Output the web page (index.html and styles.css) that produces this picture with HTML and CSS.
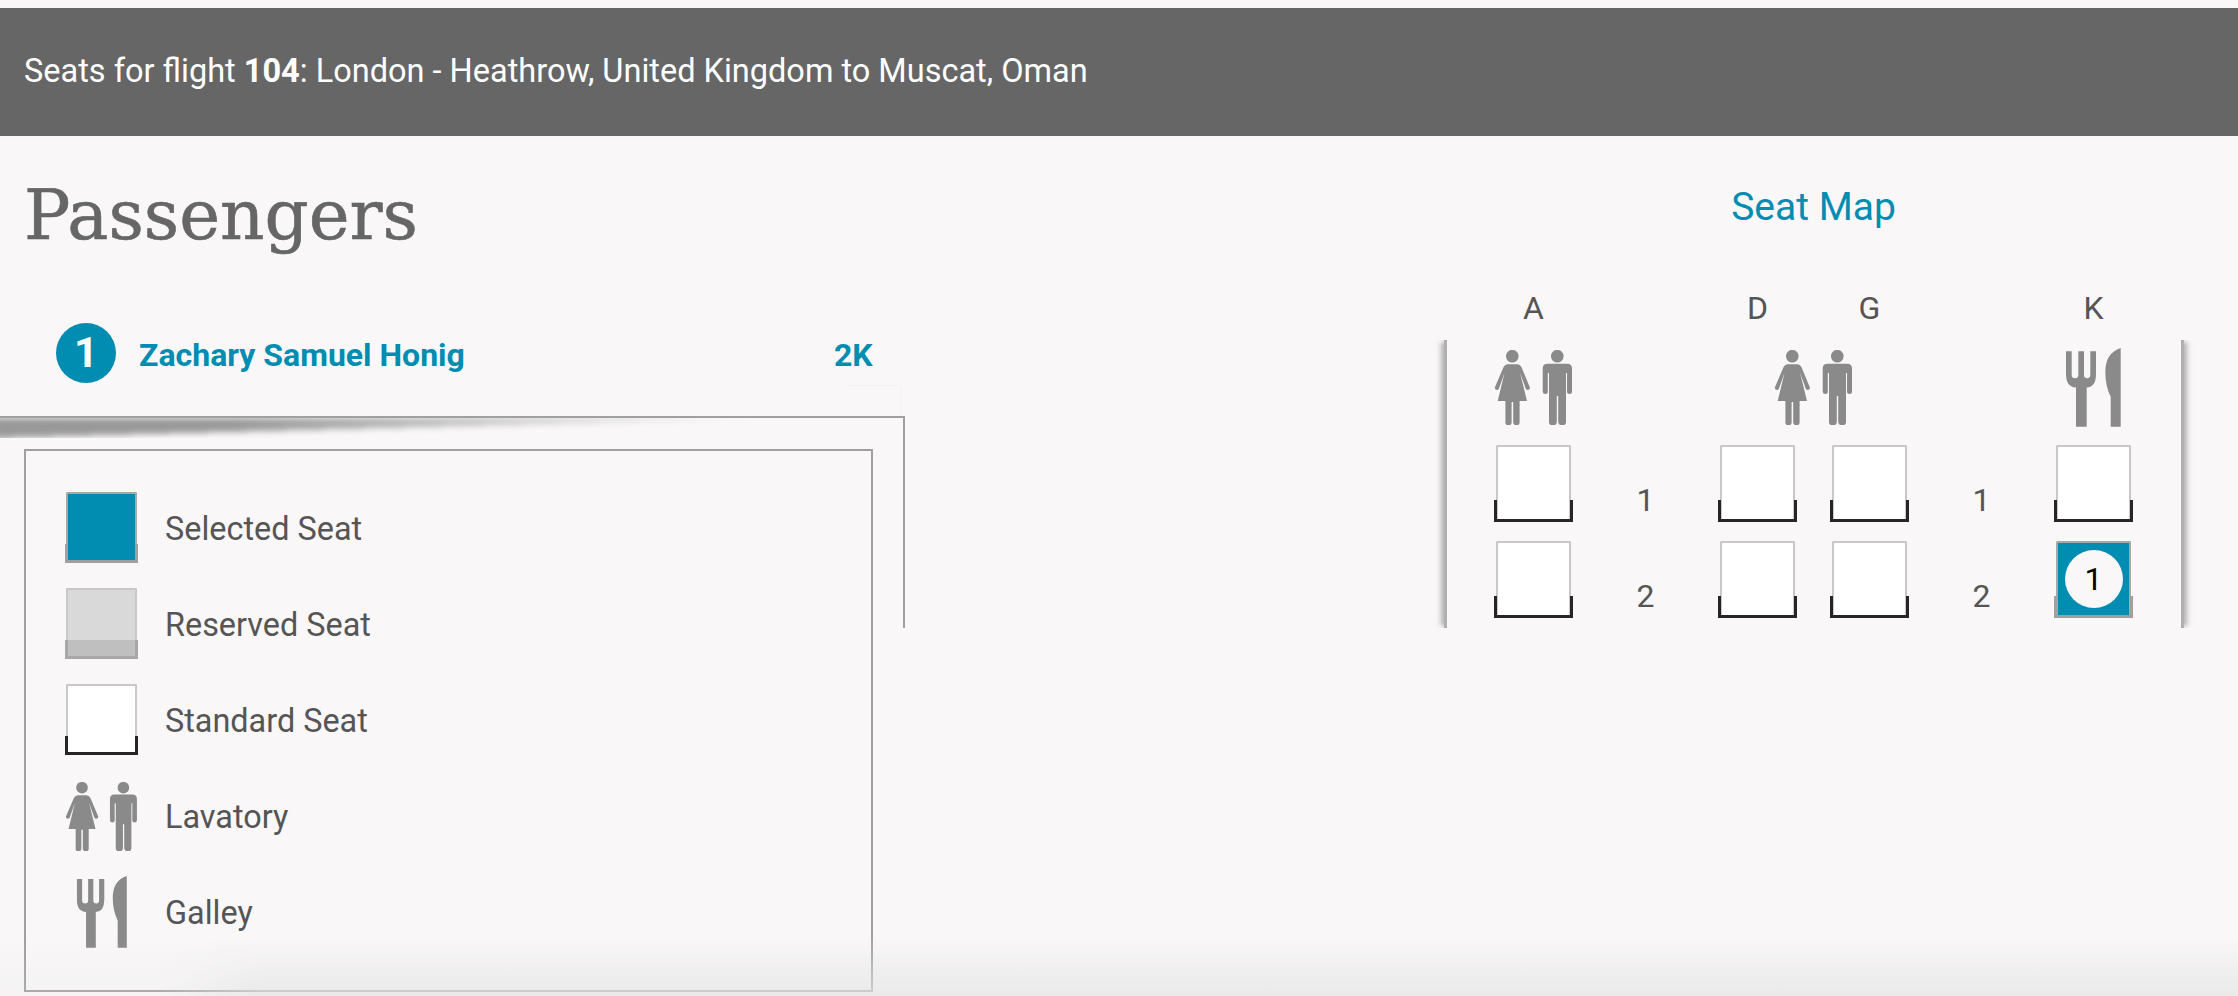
FILE: index.html
```html
<!DOCTYPE html>
<html lang="en">
<head>
<meta charset="utf-8">
<title>Seats for flight 104</title>
<link rel="stylesheet" href="styles.css">
</head>
<body>
<svg class="defs" width="0" height="0" aria-hidden="true">
  <symbol id="lav" viewBox="0 0 77 75">
    <circle cx="17.3" cy="6.2" r="6.3"/>
    <path d="M13 14.3H22q3 0 4.5 3L34.7 37q.7 2-1.2 2.8q-1.9.7-2.8-1.3L25 22.5L32 51H24.6V72.5q0 2.8-3 2.8t-3.4-2.8V52H16.6V72.5q0 2.8-3.2 2.8t-3-2.8V51H2.7L9.6 22.5L4 38.5q-.9 2-2.8 1.3Q-.7 39 0 37L8.5 17.3q1.5-3 4.5-3Z"/>
    <circle cx="62.3" cy="6.2" r="6.3"/>
    <path d="M52.5 13.7H72q5 0 5 5V41.5q0 2.5-2.5 2.5T72 41.5V23H71V72q0 3.3-3.7 3.3T63.2 72V46H61.8V72q0 3.3-4 3.3T54 72V23H52.8V41.5q0 2.5-2.5 2.5T47.7 41.5V18.7q0-5 4.8-5Z"/>
  </symbol>
  <symbol id="galley" viewBox="0 0 55 79">
    <path d="M0 3.3H5.7V27a3.3 3.3 0 0 0 6.6 0V3.3H18V27a3.15 3.15 0 0 0 6.3 0V3.3H30V26Q30 39 20.7 39.5V78.7H10V39.5Q0 39 0 26Z"/>
    <path d="M54.7 0V78.7H44.7V49Q39.3 38 39.3 24Q39.3 5 54.7 0Z"/>
  </symbol>
</svg>

<header class="flight-bar">Seats for flight <b>104</b>: London - Heathrow, United Kingdom to Muscat, Oman</header>

<main class="content">
  <section class="passengers">
    <h1 class="title">Passengers</h1>
    <div class="passenger">
      <span class="badge">1</span>
      <span class="name">Zachary Samuel Honig</span>
      <span class="assigned">2K</span>
    </div>
    <div class="panel">
      <ul class="legend">
        <li class="legend-row"><span class="icon-cell"><span class="seat seat-small selected"></span></span>Selected Seat</li>
        <li class="legend-row"><span class="icon-cell"><span class="seat seat-small reserved"></span></span>Reserved Seat</li>
        <li class="legend-row"><span class="icon-cell"><span class="seat seat-small"></span></span>Standard Seat</li>
        <li class="legend-row"><span class="icon-cell"><svg class="lav lav-small"><use href="#lav"/></svg></span>Lavatory</li>
        <li class="legend-row"><span class="icon-cell"><svg class="galley galley-small"><use href="#galley"/></svg></span>Galley</li>
      </ul>
    </div>
  </section>

  <section class="map">
    <h2 class="map-title">Seat Map</h2>
    <div class="letters">
      <span>A</span><span></span><span>D</span><span>G</span><span></span><span>K</span>
    </div>
    <div class="cabin">
      <div class="cabin-row facilities">
        <svg class="lav"><use href="#lav"/></svg>
        <span></span>
        <svg class="lav lav-span"><use href="#lav"/></svg>
        <span></span>
        <svg class="galley"><use href="#galley"/></svg>
      </div>
      <div class="cabin-row">
        <span class="seat"></span><span class="row-no">1</span><span class="seat"></span><span class="seat"></span><span class="row-no">1</span><span class="seat"></span>
      </div>
      <div class="cabin-row">
        <span class="seat"></span><span class="row-no">2</span><span class="seat"></span><span class="seat"></span><span class="row-no">2</span><span class="seat selected"><span class="occupant">1</span></span>
      </div>
    </div>
  </section>
</main>
</body>
</html>
```

FILE: styles.css
```css
* { box-sizing: border-box; }

html, body { height: 100%; }

body {
  margin: 0;
  padding-top: 8px;
  height: 996px;
  overflow: hidden;
  position: relative;
  background: #f9f7f8;
  color: #555;
  font-family: Roboto, "Liberation Sans", sans-serif;
  font-size: 32px;
}

body::after {
  content: "";
  position: absolute;
  left: 0;
  right: 0;
  bottom: 0;
  height: 60px;
  background: linear-gradient(to bottom, rgba(228, 228, 228, 0), rgba(228, 228, 228, .7));
  -webkit-mask-image: linear-gradient(to right, rgba(0,0,0,.25) 160px, #000 260px);
  mask-image: linear-gradient(to right, rgba(0,0,0,.25) 160px, #000 260px);
  pointer-events: none;
}

.defs { position: absolute; }

.flight-bar {
  height: 128px;
  padding: 0 24px;
  line-height: 126px;
  background: #666;
  color: #fff;
  font-size: 32.5px;
}

.content {
  display: flex;
}

.passengers {
  width: 905px;
  flex: none;
}

.title {
  margin: 0;
  padding: 29px 0 0 24px;
  height: 168px;
  font-family: "DejaVu Serif", serif;
  font-weight: 400;
  font-size: 69px;
  line-height: 100px;
  color: #666;
  -webkit-text-stroke: .6px #666;
}

.passenger {
  display: flex;
  align-items: center;
  height: 112px;
  padding: 0 0 10px 56px;
  position: relative;
  color: #008db1;
  font-weight: 700;
}

.passenger::after {
  content: "";
  position: absolute;
  right: 3px;
  top: 81px;
  width: 56px;
  height: 31px;
  border-top: 1px solid #f4f2f3;
  border-right: 1px solid #f4f2f3;
}

.badge {
  width: 60px;
  height: 60px;
  border-radius: 50%;
  background: #008db1;
  color: #fff;
  font-size: 42px;
  line-height: 60px;
  text-align: center;
  margin: 0 23px 5px 0;
}

.name { width: 695px; }

.panel {
  position: relative;
  height: 212px;
  border-top: 2px solid #a0a0a0;
  border-right: 2px solid #a0a0a0;
  padding: 31px 0 0 24px;
}

.panel::before {
  content: "";
  position: absolute;
  left: -6px;
  top: 0;
  width: 780px;
  height: 20px;
  background: linear-gradient(to bottom right, #999 50%, rgba(153, 153, 153, 0) 50%);
  filter: blur(3px);
  clip-path: inset(0 -10px -30px -10px);
  -webkit-mask-image: linear-gradient(to right, #000 30%, transparent 100%);
  mask-image: linear-gradient(to right, #000 30%, transparent 100%);
}

.legend {
  list-style: none;
  position: relative;
  margin: 0;
  width: 849px;
  height: 543px;
  padding: 30px 0 0 39px;
  border: 2px solid #a0a0a0;
  background: #f9f7f8;
  font-size: 32.4px;
}

.legend-row {
  display: flex;
  align-items: center;
  height: 96px;
}

.icon-cell {
  width: 100px;
  display: flex;
  justify-content: center;
  flex: none;
  padding-right: 27px;
  margin-top: -1px;
}

.seat {
  --seat-w: 75px;
  --seat-h: 77px;
  --bracket-h: 19px;
  --bracket: #262626;
  --bracket-out: -4px;
  position: relative;
  display: block;
  width: var(--seat-w);
  height: var(--seat-h);
  background: #fff;
  border: 2px solid #c8c8c8;
  border-bottom: 0;
  border-radius: 2px 2px 0 0;
}

.seat::after {
  content: "";
  position: absolute;
  left: var(--bracket-out);
  right: var(--bracket-out);
  bottom: 0;
  height: var(--bracket-h);
  border: 3px solid var(--bracket);
  border-top: 0;
}

.seat-small {
  --seat-w: 71px;
  --seat-h: 71px;
  --bracket-h: 16px;
  --bracket-out: -3px;
  margin-top: -2px;
}

.selected {
  background: #008db1;
  border-color: #a8a8a8;
  --bracket: #a0a0a0;
}

.reserved {
  background: #d9d9d9;
  --bracket: #a8a8a8;
}

.reserved::after { background: #bfbfbf; }

.occupant {
  position: absolute;
  z-index: 1;
  left: 50%;
  top: 50%;
  width: 58px;
  height: 58px;
  margin: -31px 0 0 -29px;
  border-radius: 50%;
  background: #f9f7f8;
  color: #000;
  line-height: 58px;
  text-align: center;
}

.lav, .galley { fill: #8a8a8a; display: block; }
.lav { width: 77px; height: 75px; }
.galley { width: 55px; height: 79px; }
.lav-small { width: 73px; height: 69px; }
.galley-small { width: 52px; height: 72px; margin-top: -1px; }

.map {
  flex: 1;
  padding-left: 484px;
  display: flex;
  flex-direction: column;
  align-items: center;
}

.map-title {
  margin: 0;
  padding-top: 44px;
  height: 139px;
  line-height: 54px;
  font-size: 39px;
  font-weight: 400;
  color: #008db1;
}

.letters,
.cabin-row {
  display: grid;
  grid-template-columns: repeat(6, 112px);
  justify-items: center;
  align-items: center;
}

.letters {
  height: 65px;
  width: 740px;
  justify-content: center;
  padding-top: 1px;
}

.cabin {
  width: 740px;
  height: 288px;
  border-left: 3px solid #b0b0b0;
  border-right: 3px solid #b0b0b0;
  box-shadow: -5px 0 5px -2px rgba(130,130,130,.6), 5px 0 5px -2px rgba(130,130,130,.6);
  clip-path: inset(0 -14px);
  padding-left: 31px;
}

.cabin-row { height: 96px; align-items: start; padding-top: 10px; }

.facilities { height: 95px; align-items: center; padding-top: 0; }

.lav-span { grid-column: 3 / span 2; }

.row-no { padding-top: 36px; }
```
